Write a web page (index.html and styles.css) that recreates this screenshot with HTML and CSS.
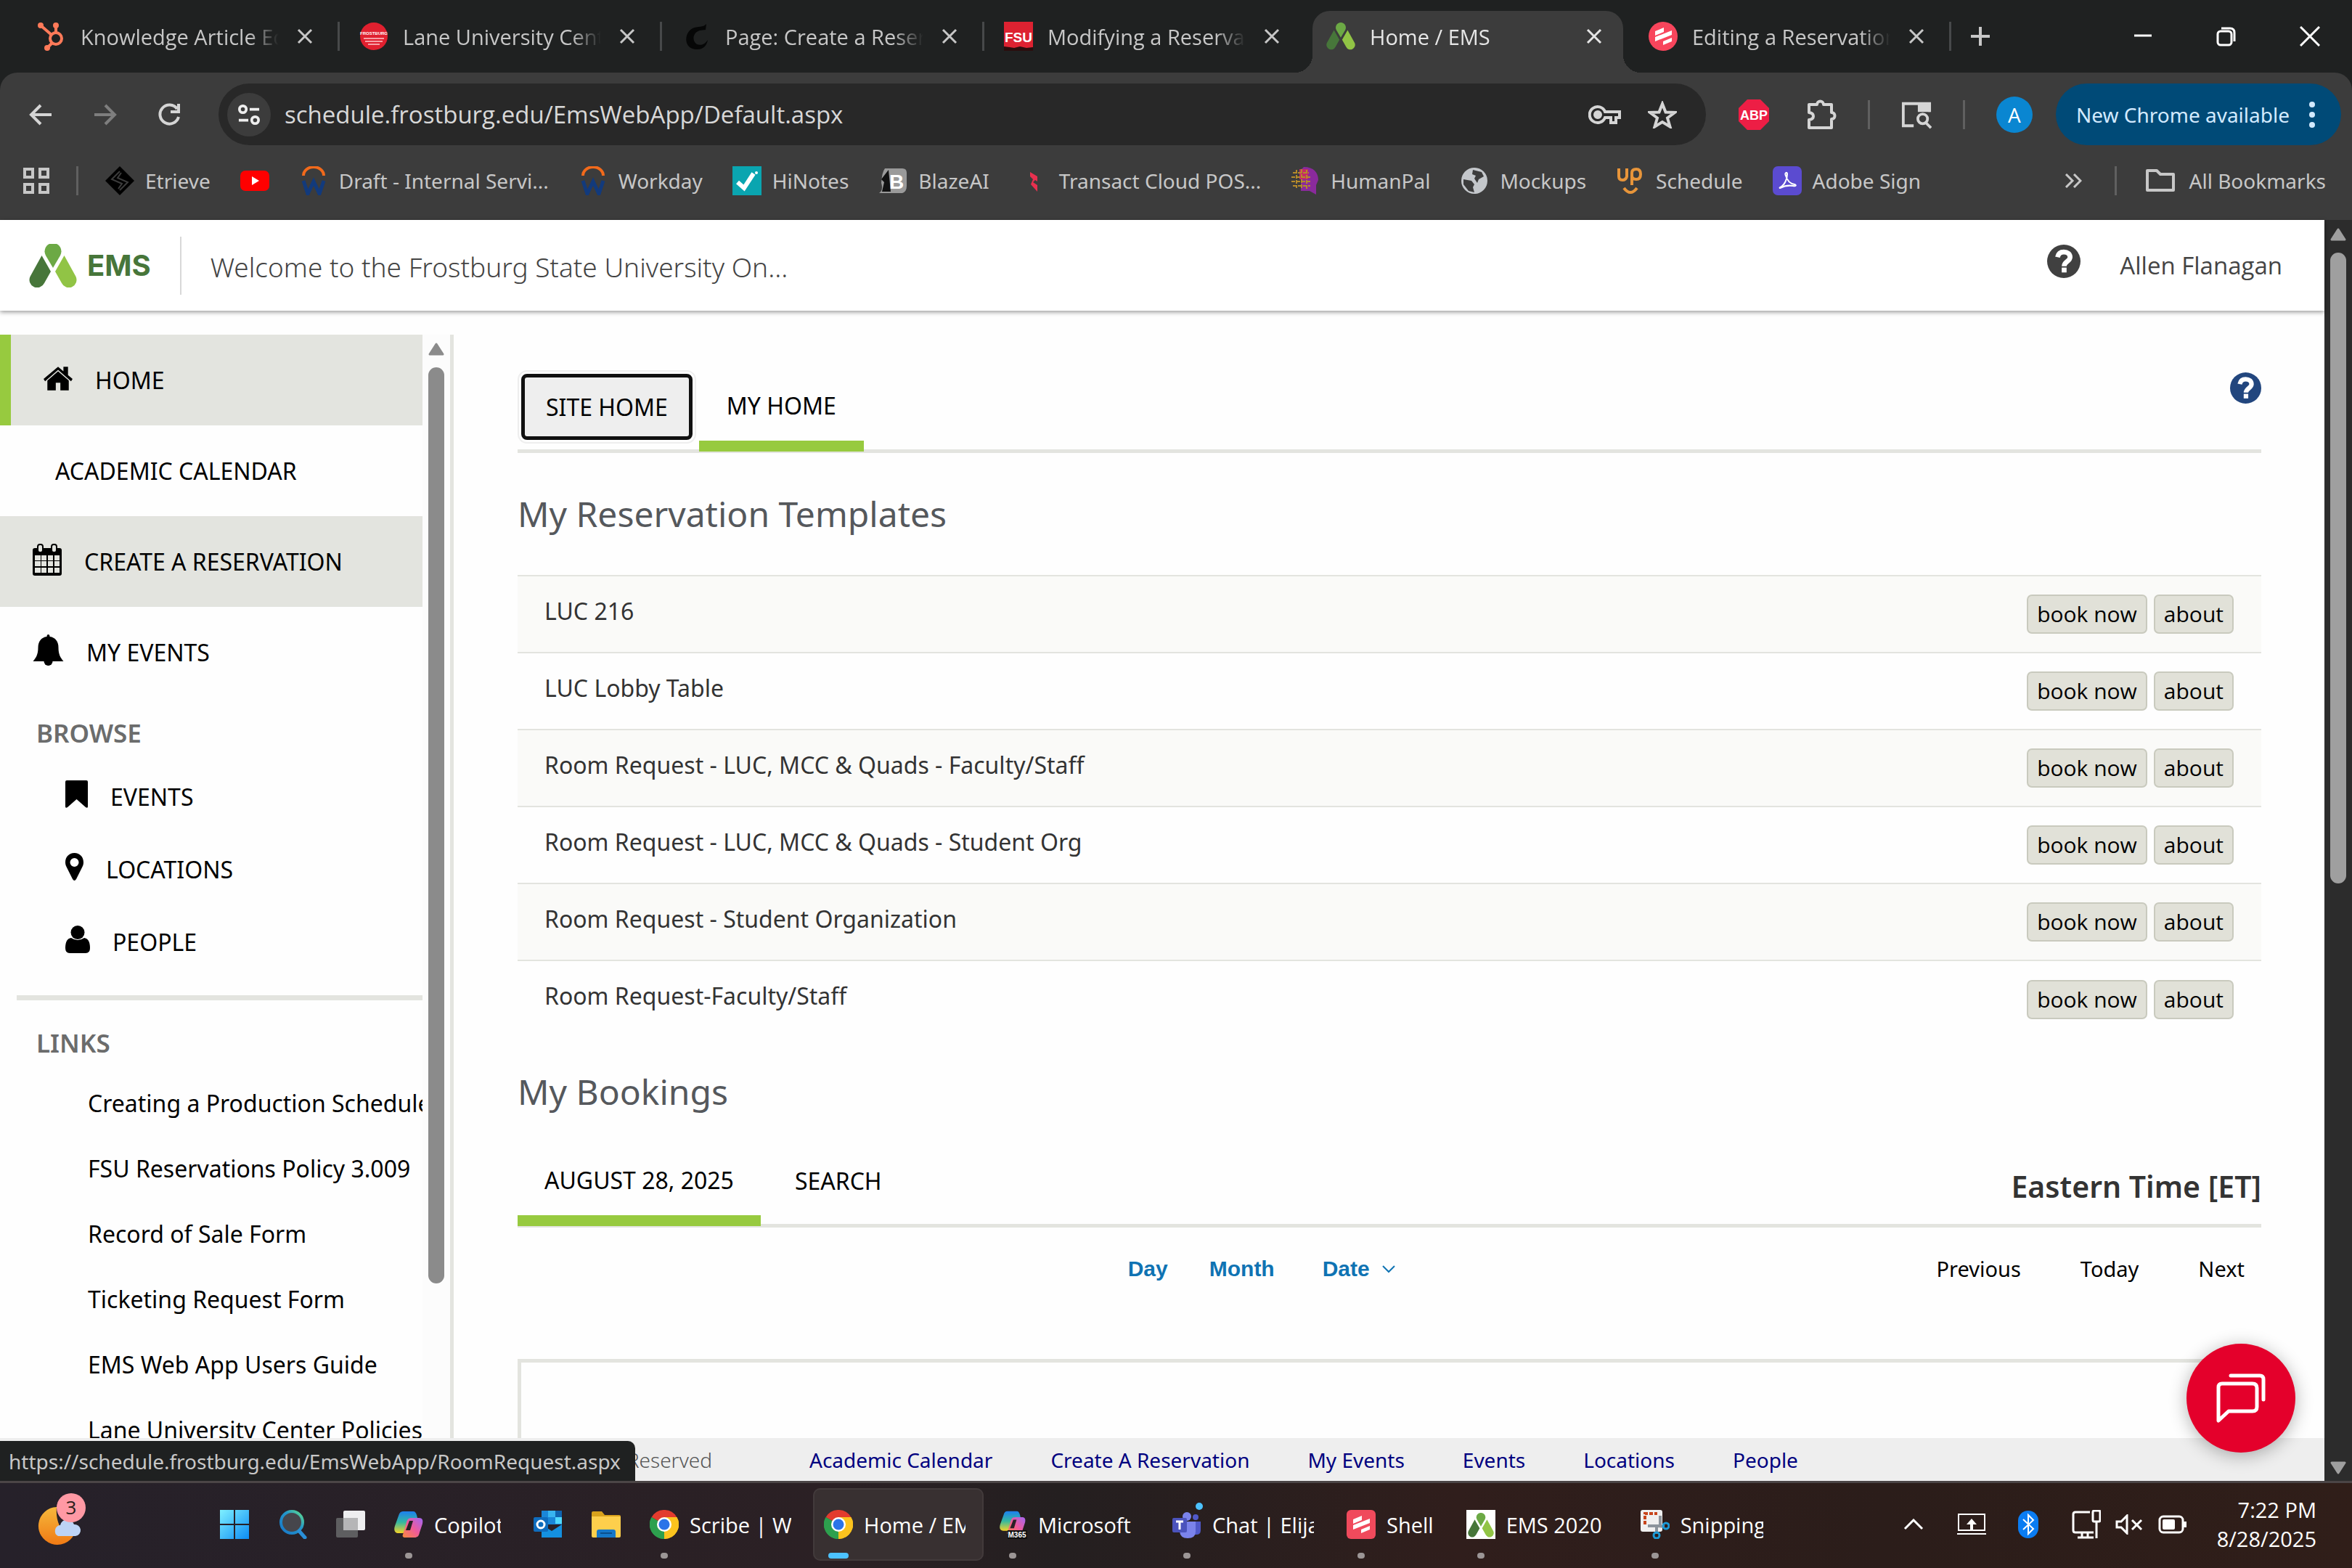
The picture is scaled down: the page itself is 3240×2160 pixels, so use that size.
FILE: index.html
```html
<!DOCTYPE html>
<html lang="en">
<head>
    <meta charset="UTF-8">
    <meta name="viewport" content="width=device-width, initial-scale=1.0">
    <title>Home / EMS</title>
    <link rel="stylesheet" href="styles.css">
</head>
<body>

<!-- shared icons -->
<svg class="defs" width="0" height="0" aria-hidden="true">
    <symbol id="close" viewBox="0 0 24 24"><path d="M3 3l18 18M21 3L3 21" stroke="currentColor" stroke-width="3" fill="none"/></symbol>
    <symbol id="ems" viewBox="0 0 66 60">
        <path d="M33 33L23 16A11.500 11.500 0 1 1 43 16Z" fill="#6ca945"/>
        <path d="M17.500 16L30 38L21 54A10.500 10.500 0 0 1 1.500 45Z" fill="#47763a"/>
        <path d="M48.500 16L36 38L45 54A10.500 10.500 0 0 0 64.500 45Z" fill="#91c445"/>
    </symbol>
    <symbol id="help" viewBox="0 0 48 48">
        <circle cx="24" cy="24" r="24" fill="currentColor"/>
        <path d="M15 18c1-5 4-7.500 9-7.500 5.500 0 9 3 9 7.500 0 6-8.500 6.500-8.500 13" fill="none" stroke="#fff" stroke-width="7"/>
        <rect x="21" y="33" width="7" height="7" fill="#fff"/>
    </symbol>
    <symbol id="workday" viewBox="0 0 40 40">
        <path d="M6 13a14 12 0 0 1 28 0" fill="none" stroke="#f26a1b" stroke-width="4"/>
        <path d="M6 20l6 18 8-17 8 17 6-18" fill="none" stroke="#123a7c" stroke-width="5"/>
    </symbol>
    <symbol id="chrome" viewBox="0 0 48 48">
        <path d="M24 24L3.200 12A24 24 0 0 1 44.800 12Z" fill="#e33b2e"/>
        <path d="M24 24L44.800 12A24 24 0 0 1 24 48Z" fill="#fcc31e"/>
        <path d="M24 24L24 48A24 24 0 0 1 3.200 12Z" fill="#2da04e"/>
        <path d="M24 12h20.800A24 24 0 0 1 24 48l10.400-18z" fill="#fcc31e"/>
        <path d="M3.200 12L13.600 30 24 36l-1 12A24 24 0 0 1 3.200 12z" fill="#2da04e"/>
        <circle cx="24" cy="24" r="12" fill="#fff"/>
        <circle cx="24" cy="24" r="9" fill="#2c74e8"/>
    </symbol>
    <symbol id="scribe" viewBox="0 0 40 40">
        <path d="M9 13l12-5v6l-12 5zM9 21l23-9v6L9 27zM20 27l12-5v5l-12 5z" fill="#fff"/>
    </symbol>
    <linearGradient id="copilotA" x1="0" y1="0" x2="0" y2="1"><stop offset="0" stop-color="#1c7ff0"/><stop offset=".5" stop-color="#35b8a0"/><stop offset="1" stop-color="#f5d327"/></linearGradient>
    <linearGradient id="copilotB" x1="1" y1="0" x2="0" y2="1"><stop offset="0" stop-color="#a267f5"/><stop offset=".5" stop-color="#ee5a9a"/><stop offset="1" stop-color="#fb8a3c"/></linearGradient>
    <symbol id="copilot" viewBox="0 0 40 40">
        <path d="M12 2h14c3 0 4 2 5 5l1 4h-6c-4 0-6 2-7 6l-3 10c-1 3-2 5-5 5H6c-5 0-7-4-5-10L6 8c1-4 3-6 6-6z" fill="url(#copilotA)"/>
        <path d="M28 38H15c-3 0-4-2-3-4l5-17c1-4 3-6 7-6h10c5 0 6 3 5 8l-4 12c-1 5-3 7-7 7z" fill="url(#copilotB)"/>
        <path d="M21 15h5l-4 13h-6z" fill="#2a2025"/>
    </symbol>
</svg>

<div class="browser">
    <div class="tab-strip">
        <div class="tab">
            <svg class="favicon" viewBox="0 0 40 40" fill="none" stroke="#ff7a59" stroke-width="4"><circle cx="26" cy="23" r="8"/><path d="M26 15V5M20 18L5 5M21 29l-7 7"/><circle cx="26" cy="5" r="2"/><circle cx="5" cy="5" r="2"/><circle cx="14" cy="36" r="2"/></svg>
            <span class="tab-title">Knowledge Article Editor</span>
            <button class="tab-close" aria-label="Close tab"><svg><use href="#close"/></svg></button>
        </div>
        <div class="tab">
            <svg class="favicon" viewBox="0 0 40 40"><circle cx="20" cy="20" r="19" fill="#e0202f"/><text x="20" y="18" class="frost-text">FROSTBURG</text><path d="M6 23h28M8 27h24M12 31h16" stroke="#f6a0a6" stroke-width="2"/></svg>
            <span class="tab-title">Lane University Center</span>
            <button class="tab-close" aria-label="Close tab"><svg><use href="#close"/></svg></button>
        </div>
        <div class="tab">
            <svg class="favicon" viewBox="0 0 40 40"><path d="M15 9C2 16 3 39 22 38c8 0 13-6 14-13-5 8-14 9-18 3-4-7 0-14 7-16l8-1 1-8c-4 5-12 3-19 6z" fill="#060707"/></svg>
            <span class="tab-title">Page: Create a Reservation</span>
            <button class="tab-close" aria-label="Close tab"><svg><use href="#close"/></svg></button>
        </div>
        <div class="tab no-sep">
            <svg class="favicon" viewBox="0 0 40 40"><rect width="40" height="40" fill="#dd2231"/><path d="M0 34l8 1 6 1 8-2 9 2 9-1v5H0z" fill="#2b0d0d"/><text x="20" y="28" class="fsu-text">FSU</text></svg>
            <span class="tab-title">Modifying a Reservation</span>
            <button class="tab-close" aria-label="Close tab"><svg><use href="#close"/></svg></button>
        </div>
        <div class="tab active no-sep">
            <svg class="favicon"><use href="#ems"/></svg>
            <span class="tab-title">Home / EMS</span>
            <button class="tab-close" aria-label="Close tab"><svg><use href="#close"/></svg></button>
        </div>
        <div class="tab">
            <svg class="favicon" viewBox="0 0 40 40"><circle cx="20" cy="20" r="20" fill="#f8455c"/><use href="#scribe" width="40" height="40"/></svg>
            <span class="tab-title">Editing a Reservation</span>
            <button class="tab-close" aria-label="Close tab"><svg><use href="#close"/></svg></button>
        </div>
        <button class="new-tab" aria-label="New tab"><svg viewBox="0 0 28 28"><path d="M14 1v26M1 14h26" stroke="currentColor" stroke-width="4"/></svg></button>
        <div class="window-controls">
            <button aria-label="Minimize"><svg viewBox="0 0 28 28"><path d="M2 13h24" stroke="#fff" stroke-width="3"/></svg></button>
            <button aria-label="Restore"><svg viewBox="0 0 28 28" fill="none" stroke="#fff" stroke-width="3"><rect x="2" y="7" width="19" height="19" rx="4"/><path d="M7 3h12q6 0 6 6v12"/></svg></button>
            <button aria-label="Close window"><svg viewBox="0 0 28 28"><path d="M1 1l26 26M27 1L1 27" stroke="#fff" stroke-width="3"/></svg></button>
        </div>
    </div>

    <div class="chrome-top">
        <div class="toolbar">
            <button class="nav-btn" aria-label="Back"><svg viewBox="0 0 32 32"><path d="M31 16H3M16 3L3 16l13 13" fill="none" stroke="#d5d5d5" stroke-width="4"/></svg></button>
            <button class="nav-btn" aria-label="Forward"><svg viewBox="0 0 32 32"><path d="M1 16h28M16 3l13 13-13 13" fill="none" stroke="#7e7e7e" stroke-width="4"/></svg></button>
            <button class="nav-btn" aria-label="Reload"><svg viewBox="0 0 32 32"><path d="M28 19A13 13 0 1 1 26 8" fill="none" stroke="#d5d5d5" stroke-width="4"/><path d="M30 1v13H17v-4h9V1z" fill="#d5d5d5"/></svg></button>
            <div class="omnibox">
                <button class="site-info" aria-label="Site information"><svg viewBox="0 0 32 32" fill="none" stroke="#eee" stroke-width="4"><circle cx="7" cy="8" r="5"/><path d="M17 8h14M1 24h14"/><circle cx="25" cy="24" r="5"/></svg></button>
                <input class="url" type="text" aria-label="Address" value="schedule.frostburg.edu/EmsWebApp/Default.aspx">
                <svg class="key" viewBox="0 0 46 28" fill="none" stroke="#d5d5d5" stroke-width="4"><path d="M23 10a11 11 0 1 0 0 8h8v7h7v-7h5v-8z"/><circle cx="13" cy="14" r="4" fill="#d5d5d5"/></svg>
                <svg class="star" viewBox="0 0 40 38"><path d="M20 4l4.500 11.500 12.500.5-10 7.500 3.500 12L20 29 9.500 35.500l3.500-12-10-7.500 12.500-.5z" fill="none" stroke="#d5d5d5" stroke-width="4"/></svg>
            </div>
            <div class="toolbar-right">
                <svg class="ext" viewBox="0 0 42 42"><path d="M12 0h18l12 12v18L30 42H12L0 30V12z" fill="#ed1e45"/><text x="21" y="28" class="abp-text">ABP</text></svg>
                <svg class="ext" viewBox="0 0 42 42"><path d="M4 7h11c0-6 9-6 9 0h11v11c6 0 6 9 0 9v12H4V28c8-1 8-9 0-10z" fill="none" stroke="#d5d5d5" stroke-width="4" stroke-linejoin="round"/></svg>
                <span class="bar-sep"></span>
                <svg class="ext" viewBox="0 0 44 42"><path d="M18 37H3V5h38v12" fill="none" stroke="#d5d5d5" stroke-width="4"/><path d="M24 5h18v12H24z" fill="#d5d5d5"/><circle cx="31" cy="27" r="7" fill="none" stroke="#d5d5d5" stroke-width="4"/><path d="M35 32l8 8" stroke="#d5d5d5" stroke-width="4"/></svg>
                <span class="bar-sep"></span>
                <button class="avatar">A</button>
                <button class="update-pill">New Chrome available <svg viewBox="0 0 8 36"><g fill="#d3eaff"><circle cx="4" cy="4" r="4"/><circle cx="4" cy="18" r="4"/><circle cx="4" cy="32" r="4"/></g></svg></button>
            </div>
        </div>

        <div class="bookmarks">
            <svg class="apps" viewBox="0 0 36 36" fill="none" stroke="#c7c7c7" stroke-width="4"><path d="M2 2h11v11H2zM23 2h11v11H23zM2 23h11v11H2zM23 23h11v11H23z"/></svg>
            <span class="bar-sep"></span>
            <a href="#"><svg viewBox="0 0 40 40"><path d="M20 0l20 20-20 20L0 20z" fill="#000"/><path d="M20 7L9 18l14 6-5 7M20 33l11-11-14-6 5-7" fill="none" stroke="#3c3c3c" stroke-width="2"/></svg>Etrieve</a>
            <a href="#" aria-label="YouTube"><svg viewBox="0 0 40 40"><rect y="6" width="40" height="28" rx="7" fill="#f00"/><path d="M16 14l10 6-10 6z" fill="#fff"/></svg></a>
            <a href="#"><svg><use href="#workday"/></svg>Draft - Internal Servi...</a>
            <a href="#"><svg><use href="#workday"/></svg>Workday</a>
            <a href="#"><svg viewBox="0 0 40 40"><rect width="40" height="40" fill="#0aa5b0"/><path d="M7 22l9 8 13-20" fill="none" stroke="#fff" stroke-width="6"/><circle cx="33" cy="9" r="2" fill="#fff"/></svg>HiNotes</a>
            <a href="#"><svg viewBox="0 0 40 40"><path d="M9 3h24q6 0 6 6v18q0 8-6 10H1q6-4 3-14Q5 8 9 3z" fill="#9a9a9a"/><path d="M14 5L4 18l4 4-3 13h12z" fill="#111"/><text x="25" y="31" class="blaze-text">B</text></svg>BlazeAI</a>
            <a href="#"><svg viewBox="0 0 40 40"><path d="M15 8l10 6v7l-3-2-3 3 6 4v9l-9-10 3-7-4-4z" fill="#e8304f"/></svg>Transact Cloud POS...</a>
            <a href="#"><svg viewBox="0 0 40 40"><path d="M18 1c14 0 20 8 20 18l-3 7v13l-9-5H14V5z" fill="#8a2a9c"/><path d="M12 4h12v14H12z" fill="#c42a66"/><path d="M3 9h22M1 15h28M1 21h28M3 27h24M8 5v25M15 4v27M22 5v26" stroke="#b58a2a" stroke-width="2" stroke-dasharray="5 2"/></svg>HumanPal</a>
            <a href="#"><svg viewBox="0 0 40 40"><circle cx="20" cy="20" r="18" fill="#c4c7cb"/><path d="M5 18l11 2 4 5-2 4 2 7-8-2-7-9zM18 5l12 3 3 6-7 4-2 5-4-6 2-4-5-2z" fill="#3c3c3c"/></svg>Mockups</a>
            <a href="#"><svg viewBox="0 0 40 40" fill="none" stroke="#e8953a" stroke-width="4"><path d="M4 3v11q0 5 5 5t6-5V3M22 26V9q0-5 6-5t6 7-6 7-6-5M11 30q9 12 18 0"/></svg>Schedule</a>
            <a href="#"><svg viewBox="0 0 40 40"><rect width="40" height="40" rx="7" fill="#5b4bd0"/><path d="M9 30c8-4 11-13 11-19 0-4-4-2-2 2 2 7 6 11 12 12 3 1 2 3-2 2-6-1-12 0-18 3z" fill="none" stroke="#fff" stroke-width="2"/></svg>Adobe Sign</a>
            <div class="bookmarks-end">
                <svg class="more" viewBox="0 0 24 20"><path d="M2 1l9 9-9 9M13 1l9 9-9 9" fill="none" stroke="#c7c7c7" stroke-width="3"/></svg>
                <span class="bar-sep"></span>
                <a href="#"><svg viewBox="0 0 40 40"><path d="M2 6h13l5 5h18v22H2z" fill="none" stroke="#c7c7c7" stroke-width="4" stroke-linejoin="round"/></svg>All Bookmarks</a>
            </div>
        </div>
    </div>

    <div class="viewport">
        <div class="page">
            <header class="page-header">
                <svg class="ems-logo"><use href="#ems"/></svg>
                <span class="ems-name">EMS</span>
                <span class="header-title">Welcome to the Frostburg State University On...</span>
                <svg class="header-help"><use href="#help"/></svg>
                <a class="user" href="#">Allen Flanagan</a>
            </header>

            <div class="page-body">
                <nav class="sidebar">
                    <ul class="main-nav">
                        <li><a class="current" href="#"><svg class="ic-home" viewBox="0 0 38 32"><path d="M0 17L19 1l7 6V1h6v11l6 5-2 3L19 5 2 20z"/><path d="M5 19L19 7l14 12v13H22V22h-6v10H5z"/></svg>HOME</a></li>
                        <li><a class="no-icon" href="#">ACADEMIC CALENDAR</a></li>
                        <li><a class="hover" href="#"><svg class="ic-calendar" viewBox="0 0 40 44"><path d="M3 6h34q3 0 3 3v32q0 3-3 3H3q-3 0-3-3V9q0-3 3-3z"/><path d="M3 16h8v7H3zm9 0h7v7h-7zm9 0h7v7h-7zm9 0h7v7h-7zM3 24h8v7H3zm9 0h7v7h-7zm9 0h7v7h-7zm9 0h7v7h-7zM3 33h8v7H3zm9 0h7v7h-7zm9 0h7v7h-7zm9 0h7v7h-7z" fill="#e3e4df"/><rect x="7" y="1" width="7" height="11" rx="3" stroke="#000" stroke-width="2" fill="#e3e4df"/><rect x="26" y="1" width="7" height="11" rx="3" stroke="#000" stroke-width="2" fill="#e3e4df"/></svg>CREATE A RESERVATION</a></li>
                        <li><a href="#"><svg class="ic-bell" viewBox="0 0 42 44"><path d="M19 3q0-3 2-3t2 3c8 1 12 7 12 15 0 10 3 14 7 19H0c4-5 7-9 7-19C7 10 11 4 19 3z"/><path d="M15 37a6 6 0 0 0 12 0z"/></svg>MY EVENTS</a></li>
                    </ul>
                    <h3>BROWSE</h3>
                    <ul class="browse-nav">
                        <li><a href="#"><svg class="ic-events" viewBox="0 0 31 38"><path d="M2 0h27q2 0 2 2v34q0 3-3 1L15.500 26 3 37q-3 2-3-1V2q0-2 2-2z"/></svg>EVENTS</a></li>
                        <li><a href="#"><svg class="ic-pin" viewBox="0 0 25 38"><path fill-rule="evenodd" d="M12.500 0C5 0 0 5.500 0 13c0 3 1 5 2 7l8 16q2.500 4 5 0l8-16c1-2 2-4 2-7 0-7.500-5-13-12.500-13zm0 7a6 6 0 1 1 0 12 6 6 0 0 1 0-12z"/></svg>LOCATIONS</a></li>
                        <li><a href="#"><svg class="ic-people" viewBox="0 0 34 38"><circle cx="17" cy="9.500" r="9.500"/><path d="M8 17q9 6 18 0 8 1 8 14 0 7-6 7H6q-6 0-6-7 0-13 8-14z"/></svg>PEOPLE</a></li>
                    </ul>
                    <hr>
                    <h3>LINKS</h3>
                    <ul class="link-nav">
                        <li><a href="#">Creating a Production Schedule</a></li>
                        <li><a href="#">FSU Reservations Policy 3.009</a></li>
                        <li><a href="#">Record of Sale Form</a></li>
                        <li><a href="#">Ticketing Request Form</a></li>
                        <li><a href="#">EMS Web App Users Guide</a></li>
                        <li><a href="#">Lane University Center Policies</a></li>
                    </ul>
                </nav>
                <div class="scrollbar side-scroll">
                    <svg viewBox="0 0 22 18"><path d="M11 2L20 16H2z" stroke-width="3" stroke-linejoin="round"/></svg>
                    <div class="thumb"></div>
                </div>

                <main>
                    <div class="tabs">
                        <button class="page-tab focused">SITE HOME</button>
                        <button class="page-tab selected">MY HOME</button>
                        <svg class="main-help"><use href="#help"/></svg>
                    </div>

                    <h2>My Reservation Templates</h2>
                    <table>
                        <tbody>
                            <tr><td>LUC 216</td><td class="actions"><button>book now</button><button>about</button></td></tr>
                            <tr><td>LUC Lobby Table</td><td class="actions"><button>book now</button><button>about</button></td></tr>
                            <tr><td>Room Request - LUC, MCC &amp; Quads - Faculty/Staff</td><td class="actions"><button>book now</button><button>about</button></td></tr>
                            <tr><td>Room Request - LUC, MCC &amp; Quads - Student Org</td><td class="actions"><button>book now</button><button>about</button></td></tr>
                            <tr><td>Room Request - Student Organization</td><td class="actions"><button>book now</button><button>about</button></td></tr>
                            <tr><td>Room Request-Faculty/Staff</td><td class="actions"><button>book now</button><button>about</button></td></tr>
                        </tbody>
                    </table>

                    <h2 class="bookings-title">My Bookings</h2>
                    <div class="tabs">
                        <button class="page-tab selected date-tab">AUGUST 28, 2025</button>
                        <button class="page-tab">SEARCH</button>
                        <span class="timezone">Eastern Time [ET]</span>
                    </div>
                    <div class="cal-bar">
                        <div class="cal-view">
                            <button>Day</button>
                            <button>Month</button>
                            <button class="cal-date">Date <svg viewBox="0 0 18 12"><path d="M1 2l8 8 8-8" fill="none" stroke="currentColor" stroke-width="2"/></svg></button>
                        </div>
                        <div class="cal-nav">
                            <button>Previous</button>
                            <button>Today</button>
                            <button>Next</button>
                        </div>
                    </div>
                    <div class="calendar"></div>
                </main>
            </div>

            <footer>
                <span class="copyright">Reserved</span>
                <a href="#">Academic Calendar</a>
                <a href="#">Create A Reservation</a>
                <a href="#">My Events</a>
                <a href="#">Events</a>
                <a href="#">Locations</a>
                <a href="#">People</a>
            </footer>
            <button class="chat" aria-label="Open chat"><svg viewBox="0 0 68 68" fill="none" stroke="#fff" stroke-width="5" stroke-linecap="round" stroke-linejoin="round"><path d="M3 65V19q0-5 5-5h42q6 0 6 6v26q0 6-6 6H17z"/><path d="M20 3h40q5 0 5 5v28"/></svg></button>
            <div class="status-bubble">https://schedule.frostburg.edu/EmsWebApp/RoomRequest.aspx</div>
        </div>
        <div class="scrollbar page-scroll">
            <svg viewBox="0 0 22 18"><path d="M11 2L20 16H2z" stroke-width="3" stroke-linejoin="round"/></svg>
            <div class="thumb"></div>
            <svg class="down" viewBox="0 0 22 18"><path d="M11 16L20 2H2z" stroke-width="3" stroke-linejoin="round"/></svg>
        </div>
    </div>
</div>

<div class="taskbar">
    <button class="weather" aria-label="Widgets">
        <svg viewBox="0 0 60 60"><defs><linearGradient id="moon" x1="0" y1="0" x2="0" y2="1"><stop offset="0" stop-color="#f5b83c"/><stop offset="1" stop-color="#f07a14"/></linearGradient></defs><path d="M26 6A26 26 0 1 0 50 44C36 46 24 30 26 6z" fill="url(#moon)"/><path d="M28 46a8 8 0 0 1 3-15 10 10 0 0 1 19-1 8 8 0 0 1 2 16z" fill="#bcd3f5"/></svg>
        <span class="badge">3</span>
    </button>
    <div class="apps-row">
        <button aria-label="Start"><svg viewBox="0 0 40 40"><defs><linearGradient id="win" x1="0" y1="0" x2="1" y2="1"><stop offset="0" stop-color="#7ff0ff"/><stop offset="1" stop-color="#0c8cf5"/></linearGradient></defs><path d="M0 0h19v19H0zM21 0h19v19H21zM0 21h19v19H0zM21 21h19v19H21z" fill="url(#win)"/></svg></button>
        <button aria-label="Search"><svg viewBox="0 0 40 40"><defs><linearGradient id="mag" x1="0" y1="1" x2="1" y2="0"><stop offset="0" stop-color="#1877c9"/><stop offset=".6" stop-color="#2497c9"/><stop offset="1" stop-color="#62e08a"/></linearGradient></defs><circle cx="19" cy="17" r="15" fill="#46464c" stroke="url(#mag)" stroke-width="4"/><path d="M29 29l8 9" stroke="#2a8fd8" stroke-width="5" stroke-linecap="round"/></svg></button>
        <button aria-label="Task view"><svg viewBox="0 0 40 40"><rect y="11" width="30" height="27" rx="2" fill="#5e5e60"/><rect x="10" y="1" width="30" height="27" rx="2" fill="#eeeef0"/><path d="M10 11h20v17H10z" fill="#b5b5b7"/></svg></button>
        <button class="open"><svg><use href="#copilot"/></svg><span class="label short">Copilot</span></button>
        <button aria-label="Outlook"><svg viewBox="0 0 40 40"><path d="M11 1h28v19H11z" fill="#1a86d8"/><path d="M20 1h10v9H20z" fill="#38b4f0"/><path d="M30 1h9v9h-9z" fill="#0f64b0"/><path d="M30 10h9v9h-9z" fill="#50d9ff"/><path d="M11 20l14 9 14-9v18H11z" fill="#1490df"/><rect y="10" width="20" height="20" rx="2" fill="#0f6cbd"/><circle cx="10" cy="20" r="5" fill="none" stroke="#fff" stroke-width="3"/></svg></button>
        <button aria-label="File Explorer"><svg viewBox="0 0 40 40"><path d="M0 4q0-2 2-2h12l4 5h20q2 0 2 2v8H0z" fill="#d9a21c"/><path d="M0 9h40v27q0 2-2 2H2q-2 0-2-2z" fill="#fdcf4c"/><path d="M7 30q0-3 3-3h20q3 0 3 3v8H7z" fill="#1577c8"/><path d="M12 32h16" stroke="#0b4f8c" stroke-width="2"/></svg></button>
        <button class="open"><svg><use href="#chrome"/></svg><span class="label">Scribe | Workflow</span></button>
        <button class="open active"><svg><use href="#chrome"/></svg><span class="label">Home / EMS</span></button>
        <button class="open"><svg viewBox="0 0 40 40"><use href="#copilot" width="40" height="36"/><rect x="13" y="28" width="27" height="12" fill="#111"/><text x="26" y="38" class="m365-text">M365</text></svg><span class="label">Microsoft</span></button>
        <button class="open teams"><svg viewBox="0 0 40 40"><circle cx="32" cy="10" r="4" fill="#5059c9"/><circle cx="20" cy="9" r="6" fill="#7b83eb"/><path d="M26 16h13v12q0 6-6 6h-7z" fill="#5059c9"/><path d="M10 16h22v14q0 9-11 9-10 0-11-9z" fill="#7b83eb"/><rect y="11" width="20" height="20" rx="2" fill="#4b53bc"/><path d="M5 16h10M10 16v11" stroke="#fff" stroke-width="3"/></svg><span class="label">Chat | Elija</span></button>
        <button class="open"><svg viewBox="0 0 40 40"><rect width="40" height="40" rx="6" fill="#f04a5c"/><use href="#scribe" width="40" height="40"/></svg><span class="label fit">Shell</span></button>
        <button class="open"><svg viewBox="0 0 40 40"><rect width="40" height="40" fill="#fff"/><use href="#ems" x="2" y="4" width="36" height="34"/></svg><span class="label">EMS 2020</span></button>
        <button class="open"><svg viewBox="0 0 40 40"><rect width="30" height="30" rx="3" fill="#f0f0f0"/><path d="M6 20V5h17" fill="none" stroke="#c8451c" stroke-width="4" stroke-dasharray="5 2"/><path d="M27 8v14H10M24 22l9 1M22 24v9" fill="none" stroke="#8c949c" stroke-width="4"/><circle cx="35" cy="22" r="4" fill="none" stroke="#1c9ad6" stroke-width="3"/><circle cx="22" cy="35" r="4" fill="none" stroke="#1c9ad6" stroke-width="3"/></svg><span class="label snip">Snipping Tool</span></button>
    </div>
    <div class="tray">
        <svg class="t-up" viewBox="0 0 28 16"><path d="M2 14L14 2l12 12" fill="none" stroke="#fff" stroke-width="3"/></svg>
        <svg class="t-eject" viewBox="0 0 40 30"><path d="M2 1h36v22H2zM0 28h40" fill="none" stroke="#fff" stroke-width="2"/><path d="M20 7l7 8h-5v7h-4v-7h-5z" fill="#fff"/></svg>
        <svg class="t-bt" viewBox="0 0 28 38"><rect width="28" height="38" rx="14" fill="#0a7cf2"/><path d="M7 12l14 13-7 7V6l7 7L7 26" fill="none" stroke="#fff" stroke-width="2"/></svg>
        <svg class="t-net" viewBox="0 0 40 40" fill="none" stroke="#fff" stroke-width="3"><path d="M25 3H5q-3 0-3 3v22q0 3 3 3h25M14 31v7M22 31v7M8 38h22M34 17v22"/><rect x="29" y="1" width="10" height="15" rx="2"/></svg>
        <svg class="t-vol" viewBox="0 0 38 28" fill="none" stroke="#fff" stroke-width="3"><path d="M2 10h6l8-8v24l-8-8H2zM23 8l13 13M36 8L23 21"/></svg>
        <svg class="t-bat" viewBox="0 0 40 26"><rect x="2" y="2" width="32" height="22" rx="5" fill="none" stroke="#fff" stroke-width="3"/><rect x="6" y="6" width="17" height="14" rx="2" fill="#fff"/><path d="M37 9v8" stroke="#fff" stroke-width="4"/></svg>
        <div class="clock"><span>7:22 PM</span><span>8/28/2025</span></div>
    </div>
</div>

</body>
</html>
```

FILE: styles.css
```css
* {
    box-sizing: border-box;
}

body {
    margin: 0;
    height: 100vh;
    display: flex;
    flex-direction: column;
    overflow: hidden;
    font-family: "Open Sans", "Noto Sans", sans-serif;
    font-size: 32px;
    color: #000;
    background: #fff;
}

button {
    font: inherit;
    color: inherit;
    background: none;
    border: 0;
    padding: 0;
    cursor: pointer;
}

a {
    color: inherit;
    text-decoration: none;
}

ul {
    list-style: none;
    margin: 0;
    padding: 0;
}

svg {
    display: block;
    flex: none;
}

.defs {
    position: absolute;
}

/* Browser window */
.browser {
    flex: 1;
    min-height: 0;
    display: flex;
    flex-direction: column;
    background: #1f2121;
}

.tab-strip {
    display: flex;
    align-items: flex-end;
    height: 100px;
    padding-left: 24px;
    font-size: 29px;
    color: #c7c7c7;
}

.tab {
    position: relative;
    flex: 0 1 444px;
    min-width: 0;
    height: 85px;
    display: flex;
    align-items: center;
    padding: 0 36px 15px 27px;
}

.tab::after {
    content: "";
    position: absolute;
    right: 0;
    top: 15px;
    width: 3px;
    height: 40px;
    background: #47494a;
}

.tab.no-sep::after {
    display: none;
}

.favicon {
    width: 40px;
    height: 40px;
    margin-right: 20px;
}

.tab-title {
    flex: 1;
    min-width: 0;
    padding-top: 2px;
    overflow: hidden;
    white-space: nowrap;
    line-height: 40px;
    mask-image: linear-gradient(to right, #000 85%, transparent);
}

.tab-close {
    width: 24px;
    height: 24px;
    margin-left: 24px;
}

.tab-close svg {
    width: 24px;
    height: 24px;
}

.tab.active {
    flex-basis: 428px;
    margin: 0 8px;
    padding: 0 28px 15px 19px;
    background: #3c3c3c;
    border-radius: 24px 24px 0 0;
    color: #e6e6e6;
}

.tab.active::before,
.tab.active.no-sep::after {
    content: "";
    display: block;
    position: absolute;
    top: auto;
    bottom: 0;
    width: 24px;
    height: 24px;
}

.tab.active::before {
    left: -24px;
    background: radial-gradient(circle at 0 0, transparent 24px, #3c3c3c 24px);
}

.tab.active.no-sep::after {
    right: -24px;
    background: radial-gradient(circle at 100% 0, transparent 24px, #3c3c3c 24px);
}

.new-tab {
    align-self: center;
    margin-left: 26px;
}

.new-tab svg,
.window-controls svg {
    width: 28px;
    height: 28px;
}

.window-controls {
    align-self: center;
    display: flex;
    gap: 87px;
    margin-left: auto;
    padding-right: 44px;
}

.chrome-top {
    background: #3c3c3c;
    border-radius: 24px 24px 0 0;
    height: 203px;
}

.toolbar {
    display: flex;
    align-items: center;
    padding: 15px 15px 0 40px;
}

.nav-btn {
    margin-right: 57px;
}

.nav-btn svg {
    width: 32px;
    height: 32px;
}

.omnibox {
    flex: 1;
    height: 85px;
    display: flex;
    align-items: center;
    margin-left: -6px;
    padding: 0 40px 0 12px;
    border-radius: 43px;
    background: #282828;
}

.site-info {
    width: 60px;
    height: 60px;
    display: flex;
    align-items: center;
    justify-content: center;
    border-radius: 50%;
    background: #3c3c3c;
}

.site-info svg {
    width: 30px;
    height: 30px;
}

.url {
    flex: 1;
    min-width: 0;
    margin-left: 19px;
    padding: 0;
    border: 0;
    outline: 0;
    background: none;
    font: 33px "Open Sans", sans-serif;
    color: #d8d8d8;
}

.key {
    width: 46px;
    height: 28px;
    margin-right: 36px;
}

.star {
    width: 40px;
    height: 38px;
}

.toolbar-right {
    display: flex;
    align-items: center;
    padding-left: 45px;
}

.ext {
    width: 42px;
    height: 42px;
}

.ext + .ext {
    margin-left: 51px;
}

.bar-sep {
    width: 3px;
    height: 40px;
    margin: 0 43px;
    background: #606060;
}

.avatar {
    width: 50px;
    height: 50px;
    border-radius: 50%;
    background: #0a86d1;
    color: #fff;
    font-size: 28px;
}

.update-pill {
    display: flex;
    align-items: center;
    gap: 27px;
    height: 85px;
    margin-left: 32px;
    padding: 0 36px 0 28px;
    border-radius: 43px;
    background: #004a77;
    color: #d3eaff;
    font-family: "Noto Sans", sans-serif;
    font-size: 28px;
    white-space: nowrap;
}

.update-pill svg {
    width: 8px;
    height: 36px;
}

.bookmarks {
    display: flex;
    align-items: center;
    height: 100px;
    padding: 0 36px 2px 32px;
    font-family: "Noto Sans", sans-serif;
    font-size: 28px;
    color: #c7c7c7;
    white-space: nowrap;
}

.bookmarks .apps {
    width: 36px;
    height: 36px;
}

.bookmarks .bar-sep {
    margin: 0 37px;
}

.bookmarks a {
    display: flex;
    align-items: center;
    gap: 15px;
    margin-right: 41px;
}

.bookmarks a svg {
    width: 40px;
    height: 40px;
}

.bookmarks-end {
    display: flex;
    align-items: center;
    margin-left: auto;
}

.bookmarks-end .bar-sep {
    margin: 0 40px 0 45px;
}

.bookmarks-end a {
    margin-right: 0;
    gap: 20px;
}

.more {
    width: 24px;
    height: 20px;
}

/* Page */
.viewport {
    flex: 1;
    min-height: 0;
    display: flex;
    background: #fefefe;
    font-family: "Noto Sans", sans-serif;
}

.page {
    position: relative;
    flex: 1;
    min-width: 0;
    display: flex;
    flex-direction: column;
}

.page-header {
    display: flex;
    align-items: center;
    height: 125px;
    padding: 0 58px 0 40px;
    background: #fff;
    box-shadow: 0 2px 6px rgba(0, 0, 0, 0.4);
}

.ems-logo {
    width: 66px;
    height: 60px;
}

.ems-name {
    margin-left: 14px;
    padding-right: 40px;
    border-right: 2px solid #d8d8d8;
    line-height: 80px;
    font-family: Inter, sans-serif;
    font-size: 40px;
    font-weight: 700;
    color: #47763a;
}

.header-title {
    flex: 1;
    margin-left: 40px;
    padding-top: 4px;
    font-size: 37px;
    font-weight: 300;
    color: #444;
}

.header-help {
    width: 46px;
    height: 46px;
    margin-bottom: 12px;
    color: #404040;
}

.user {
    margin-left: 54px;
    font-family: "Open Sans", sans-serif;
    font-size: 33px;
    color: #444;
}

.page-body {
    flex: 1;
    min-height: 0;
    display: flex;
    margin-top: 33px;
}

/* Sidebar */
.sidebar {
    width: 582px;
    flex: none;
    overflow: hidden;
}

.sidebar a {
    display: flex;
    align-items: center;
    white-space: nowrap;
}

.main-nav a {
    height: 125px;
    padding-left: 45px;
}

.main-nav a.current {
    border-left: 15px solid #97ca3f;
    background: #e3e4df;
}

.main-nav a.hover {
    background: #e3e4df;
}

.main-nav a.no-icon {
    padding-left: 76px;
}

.sidebar svg {
    margin-right: 31px;
    margin-bottom: 6px;
}

.ic-home {
    width: 40px;
    height: 34px;
}

.ic-calendar {
    width: 40px;
    height: 44px;
}

.ic-bell {
    width: 43px;
    height: 44px;
}

.ic-events {
    width: 31px;
    height: 38px;
}

.ic-pin {
    width: 25px;
    height: 38px;
}

.ic-people {
    width: 34px;
    height: 38px;
}

.sidebar h3 {
    margin: 12px 0 0;
    padding-left: 50px;
    line-height: 74px;
    font-size: 35px;
    font-weight: 600;
    color: #6b6c6c;
}

.browse-nav a {
    height: 100px;
    padding-left: 90px;
}

.sidebar hr {
    height: 7px;
    margin: 24px 0 22px 23px;
    border: 0;
    background: #e3e4df;
}

.link-nav a {
    height: 90px;
    padding-left: 121px;
}

/* Scrollbars */
.scrollbar {
    display: flex;
    flex-direction: column;
    align-items: center;
    flex: none;
}

.scrollbar svg {
    width: 22px;
    height: 18px;
    margin: 11px 0 16px;
    fill: currentColor;
    stroke: currentColor;
}

.thumb {
    width: 22px;
    border-radius: 11px;
    background: currentColor;
}

.side-scroll {
    width: 43px;
    border-right: 5px solid #e3e4df;
    background: #fcfcfc;
    color: #8b8b8b;
}

.side-scroll .thumb {
    height: 83%;
}

.page-scroll {
    width: 38px;
    background: #2c2c2c;
    color: #9f9f9f;
}

.page-scroll .thumb {
    height: 50%;
}

.page-scroll .down {
    margin: auto 0 9px;
}

/* Main column */
main {
    flex: 1;
    min-width: 0;
    display: flex;
    flex-direction: column;
    padding: 50px 87px 0 88px;
}

.tabs {
    display: flex;
    align-items: flex-start;
    gap: 9px;
    height: 113px;
    flex: none;
    border-bottom: 5px solid #e3e4df;
}

.page-tab {
    height: 111px;
    padding: 0 38px 15px;
}

.page-tab.selected {
    padding-bottom: 2px;
    border-bottom: 15px solid #97ca3f;
}

.page-tab.date-tab {
    padding: 0 37px 2px;
}

.page-tab.focused {
    height: 91px;
    margin: 4px 0 0 5px;
    padding: 0 29px;
    border: 5px solid #101010;
    border-radius: 8px;
    background: #eee;
    outline: 2px solid #eee;
    outline-offset: 3px;
}

.main-help {
    width: 43px;
    height: 43px;
    margin-left: auto;
    margin-top: 2px;
    color: #22467e;
}

h2 {
    margin: 51px 0;
    line-height: 66px;
    font-size: 48px;
    font-weight: 400;
    color: #55585c;
}

h2.bookings-title {
    margin: 42px 0 41px;
}

table {
    width: 100%;
    border-collapse: collapse;
    color: #333;
}

tr {
    height: 106px;
    border-top: 2px solid #e3e4df;
}

tr:nth-child(odd) {
    background: #fafaf8;
}

td {
    padding: 0 38px 10px 37px;
}

td.actions {
    padding-bottom: 0;
    text-align: right;
}

td button {
    height: 54px;
    margin-left: 9px;
    padding: 0 12px;
    border: 2px solid #c9cabe;
    border-radius: 7px;
    background: #e1e1d8;
    font-family: "Open Sans", sans-serif;
    font-size: 30px;
    line-height: 50px;
    color: #000;
}

.timezone {
    margin-left: auto;
    line-height: 112px;
    font-size: 41px;
    font-weight: 600;
    color: #333;
}

.cal-bar {
    display: flex;
    align-items: center;
    padding: 36px 23px 103px 35%;
    line-height: 42px;
}

.cal-view {
    display: flex;
    gap: 57px;
    font-family: "Liberation Sans", Arial, sans-serif;
    font-size: 30px;
    font-weight: 700;
    color: #0f73b3;
}

.cal-date {
    display: flex;
    align-items: center;
    gap: 17px;
    margin-left: 9px;
}

.cal-date svg {
    width: 18px;
    height: 12px;
}

.cal-nav {
    display: flex;
    gap: 82px;
    margin-left: auto;
    font-size: 29px;
}

.calendar {
    flex: 1;
    border: 5px solid #e3e4df;
    border-bottom: 0;
}

footer {
    display: flex;
    align-items: center;
    gap: 80px;
    height: 59px;
    background: #eee;
    font-size: 28px;
    color: #00007f;
}

.copyright {
    width: 981px;
    margin-right: 54px;
    text-align: right;
    font-weight: 300;
    color: #555;
}

.chat {
    position: absolute;
    right: 40px;
    bottom: 39px;
    width: 150px;
    height: 150px;
    display: flex;
    align-items: center;
    justify-content: center;
    border-radius: 50%;
    background: #e4002b;
    box-shadow: 0 4px 24px rgba(0, 0, 0, 0.3);
}

.chat svg {
    width: 68px;
    height: 68px;
}

.status-bubble {
    position: absolute;
    left: 0;
    bottom: 0;
    height: 55px;
    padding: 0 20px 0 12px;
    border-top-right-radius: 10px;
    background: #1f2121;
    color: #c7c7c7;
    font-size: 28px;
    line-height: 56px;
    white-space: nowrap;
}

/* Taskbar */
.taskbar {
    display: flex;
    align-items: center;
    height: 120px;
    padding: 0 49px 3px 52px;
    border-top: 3px solid #4b4546;
    background: linear-gradient(to right, #26212a, #2b2024 35%, #241f20 45%, #301e1c 62%, #2b1d1a 80%, #301e19);
    color: #fff;
    font-size: 29px;
}

.weather {
    position: relative;
    width: 66px;
    height: 60px;
}

.weather svg {
    width: 60px;
    height: 60px;
}

.badge {
    position: absolute;
    top: -13px;
    right: 0;
    width: 40px;
    height: 40px;
    border-radius: 50%;
    background: #ff99a4;
    color: #2b1d1a;
    font-size: 26px;
    line-height: 38px;
    text-align: center;
}

.apps-row {
    display: flex;
    margin-left: 165px;
}

.apps-row button {
    position: relative;
    display: flex;
    align-items: center;
    height: 100px;
    padding: 0 20px;
    border-radius: 10px;
}

.apps-row svg {
    width: 40px;
    height: 40px;
}

.label {
    width: 140px;
    margin: 0 5px 0 15px;
    overflow: hidden;
    white-space: nowrap;
    text-align: left;
}

.label.short {
    width: 92px;
}

.label.fit {
    width: auto;
}

.label.snip {
    width: 114px;
}

.apps-row .open::after {
    content: "";
    position: absolute;
    left: 35px;
    bottom: 3px;
    width: 10px;
    height: 8px;
    border-radius: 4px;
    background: #9c9696;
}

.apps-row .active {
    margin-left: 5px;
    padding-left: 15px;
    background: #383031;
    box-shadow: inset 0 0 0 2px #423a3b;
}

.apps-row .active::after {
    left: 21px;
    width: 28px;
    background: #4cc2ff;
}

.apps-row .teams::before {
    content: "";
    position: absolute;
    left: 52px;
    top: 20px;
    width: 10px;
    height: 10px;
    border-radius: 50%;
    background: #4cc2ff;
}

.tray {
    display: flex;
    align-items: center;
    margin-left: auto;
}

.t-up {
    width: 28px;
    height: 16px;
    margin-right: 46px;
}

.t-eject {
    width: 40px;
    height: 30px;
    margin-right: 44px;
}

.t-bt {
    width: 28px;
    height: 38px;
    margin-right: 46px;
}

.t-net {
    width: 40px;
    height: 40px;
    margin-right: 20px;
}

.t-vol {
    width: 38px;
    height: 28px;
    margin-right: 21px;
}

.t-bat {
    width: 40px;
    height: 26px;
    margin-right: 41px;
}

.clock {
    display: flex;
    flex-direction: column;
    text-align: right;
    line-height: 40px;
}

/* Lettering inside the small icons */
.frost-text,
.fsu-text,
.abp-text,
.blaze-text,
.m365-text {
    font-family: "Liberation Sans", Arial, sans-serif;
    font-weight: 700;
    text-anchor: middle;
    fill: #fff;
}

.frost-text {
    font-size: 6px;
}

.fsu-text {
    font-size: 19px;
}

.abp-text {
    font-size: 18px;
}

.blaze-text {
    font-size: 28px;
}

.m365-text {
    font-size: 10px;
}
```
